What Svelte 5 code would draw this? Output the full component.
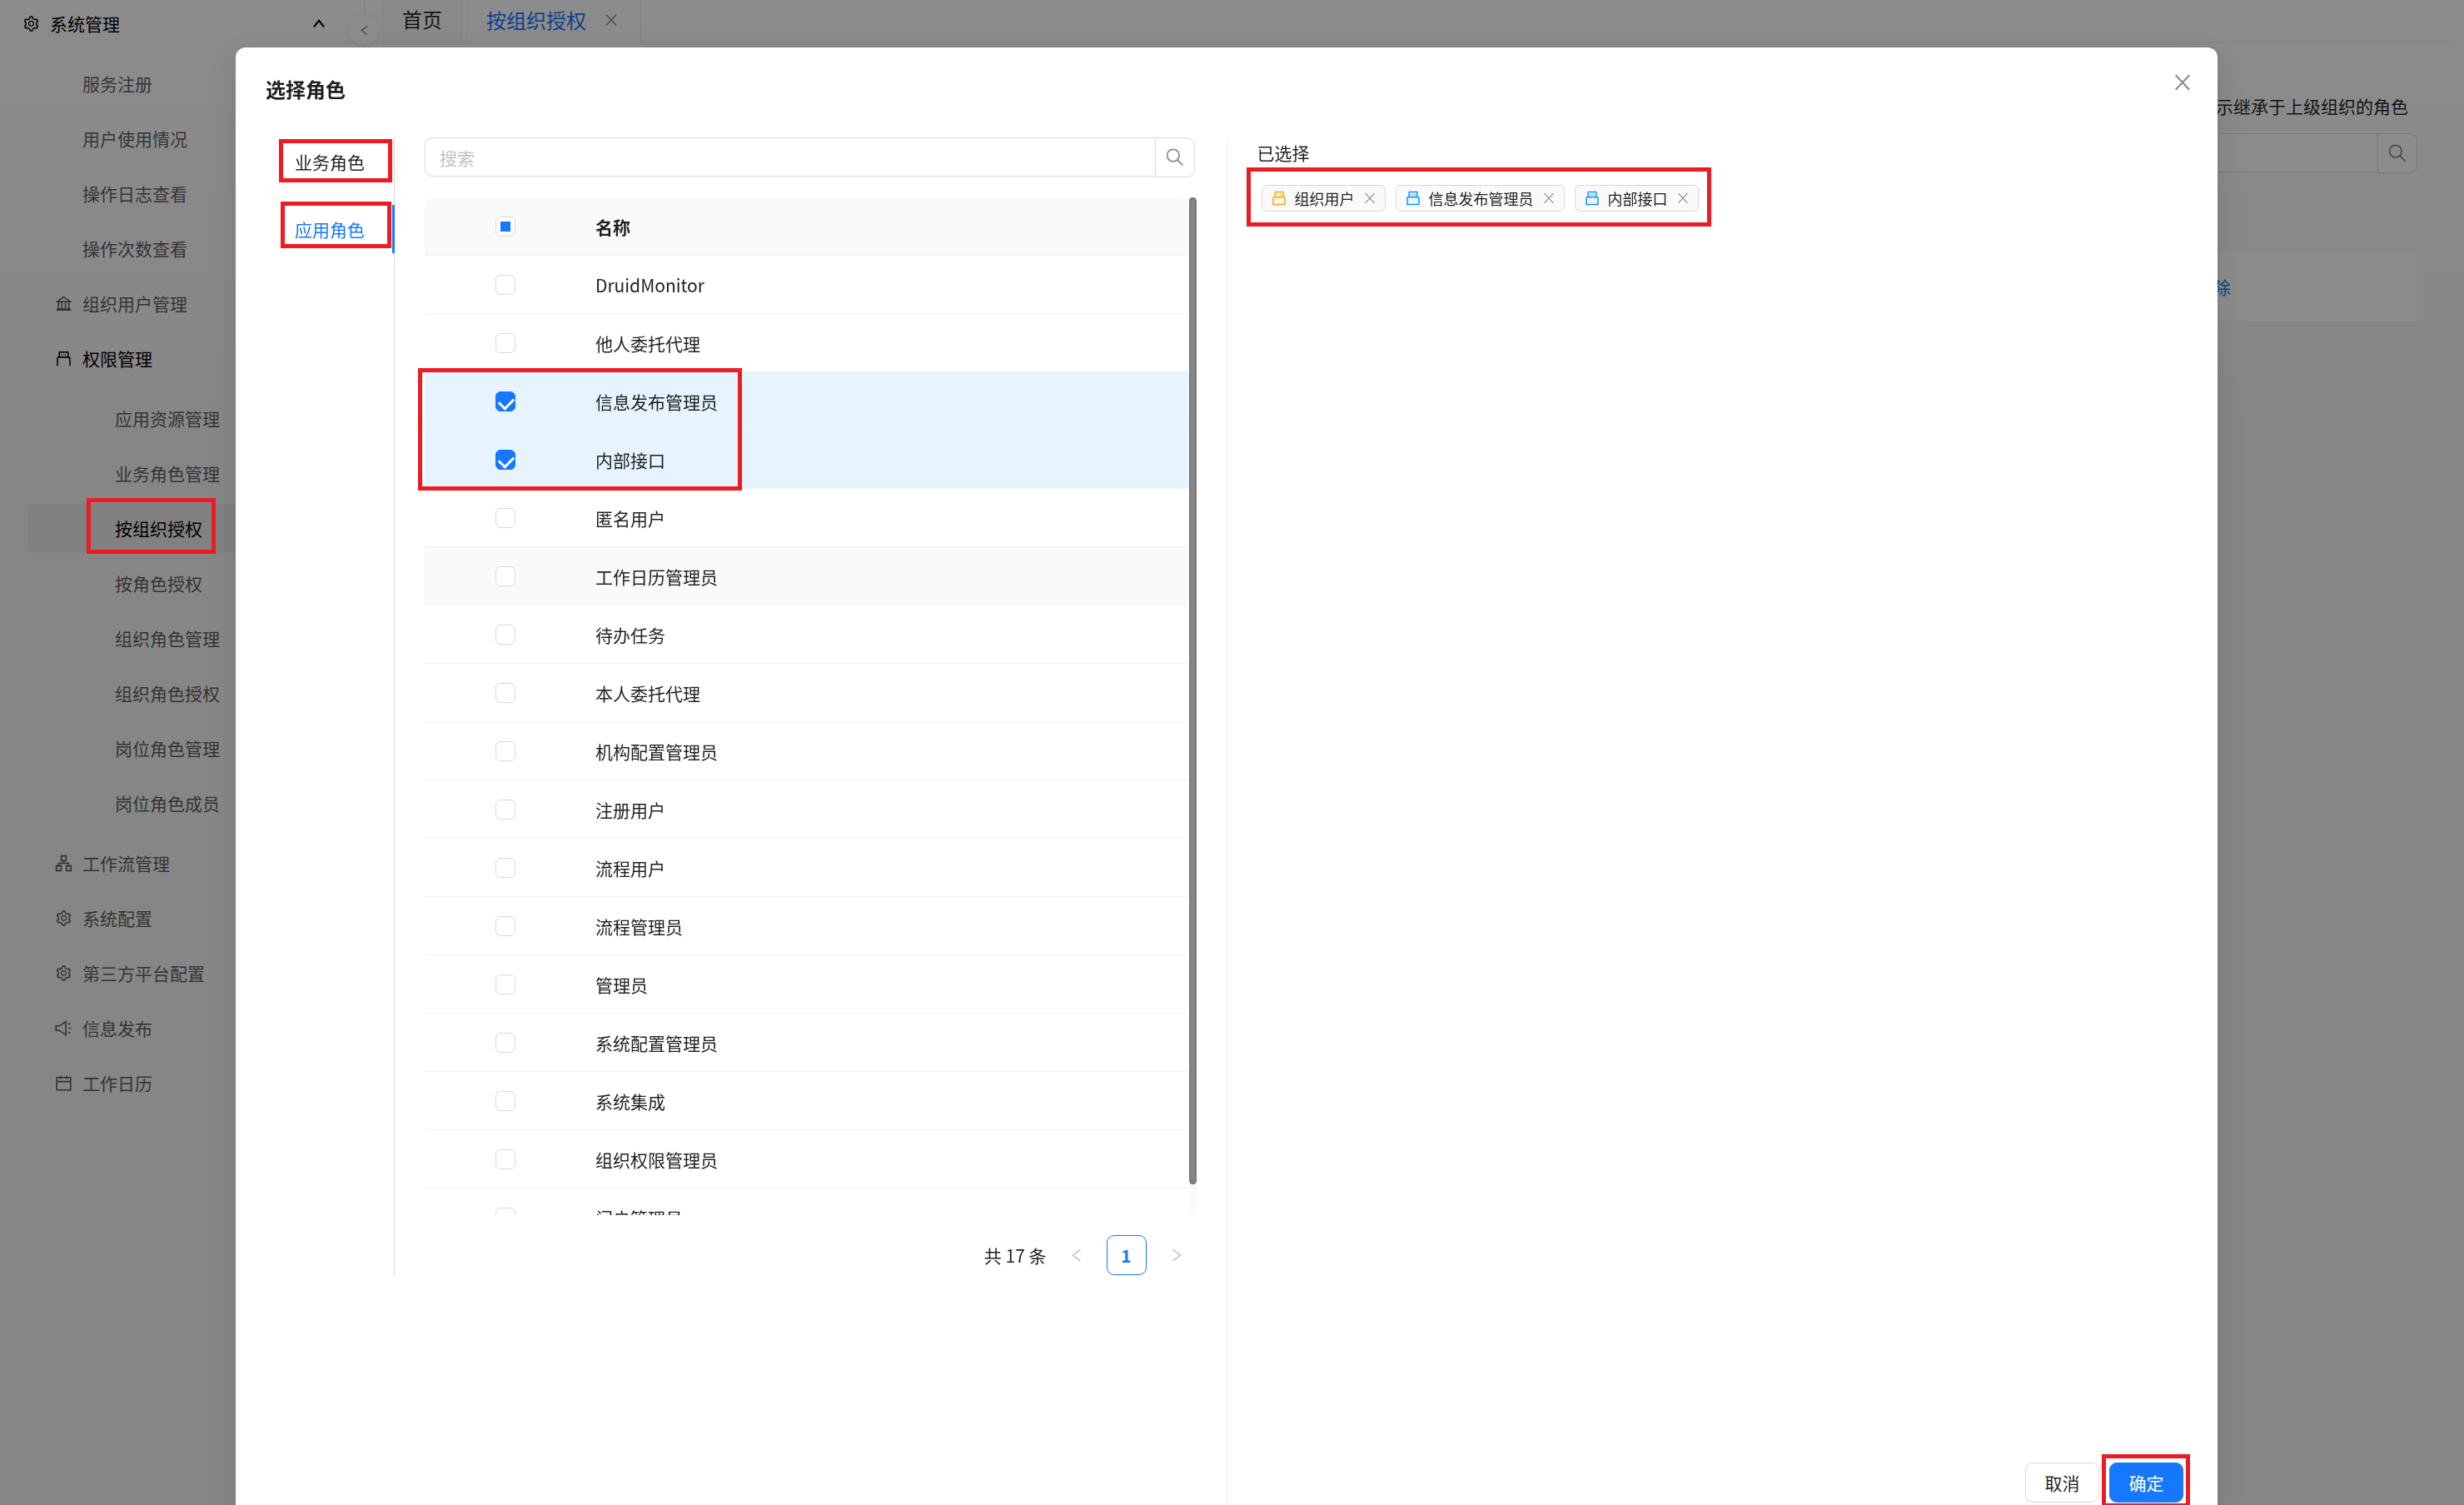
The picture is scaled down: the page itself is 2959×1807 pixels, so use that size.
<script>
  const roles = [
    'DruidMonitor', '他人委托代理', '信息发布管理员', '内部接口', '匿名用户', '工作日历管理员',
    '待办任务', '本人委托代理', '机构配置管理员', '注册用户', '流程用户', '流程管理员',
    '管理员', '系统配置管理员', '系统集成', '组织权限管理员', '门户管理员'
  ];
  let checked = $state({ 信息发布管理员: true, 内部接口: true });
  const hovered = '工作日历管理员';

  const topItems = ['服务注册', '用户使用情况', '操作日志查看', '操作次数查看'];
  const subItems = ['应用资源管理', '业务角色管理', '按组织授权', '按角色授权', '组织角色管理', '组织角色授权', '岗位角色管理', '岗位角色成员'];
  const lastItems = [
    { icon: 'flow', label: '工作流管理' },
    { icon: 'gear', label: '系统配置' },
    { icon: 'gear', label: '第三方平台配置' },
    { icon: 'horn', label: '信息发布' },
    { icon: 'calendar', label: '工作日历' }
  ];
  const tags = [
    { label: '组织用户', tone: 'orange' },
    { label: '信息发布管理员', tone: 'blue' },
    { label: '内部接口', tone: 'blue' }
  ];
</script>

{#snippet icon(name)}
  <svg class="icon {name}" viewBox="0 0 1024 1024" aria-hidden="true">
    {#if name === 'gear'}
      <path fill="currentColor" d="M924.8 625.7l-65.5-56c3.1-19 4.7-38.4 4.7-57.8s-1.6-38.8-4.7-57.8l65.5-56a32.03 32.03 0 009.3-35.2l-.9-2.6a443.74 443.74 0 00-79.7-137.9l-1.8-2.1a32.12 32.12 0 00-35.1-9.5l-81.3 28.9c-30-24.6-63.5-44-99.7-57.6l-15.7-85a32.05 32.05 0 00-25.8-25.7l-2.7-.5c-52.1-9.4-106.9-9.4-159 0l-2.7.5a32.05 32.05 0 00-25.8 25.7l-15.8 85.4a351.86 351.86 0 00-99 57.4l-81.9-29.1a32 32 0 00-35.1 9.5l-1.8 2.1a446.02 446.02 0 00-79.7 137.9l-.9 2.6c-4.5 12.5-.8 26.5 9.3 35.2l66.3 56.6c-3.1 18.8-4.6 38-4.6 57.1 0 19.2 1.5 38.4 4.6 57.1L99 625.5a32.03 32.03 0 00-9.3 35.2l.9 2.6c18.1 50.4 44.9 96.9 79.7 137.9l1.8 2.1a32.12 32.12 0 0035.1 9.5l81.9-29.1c29.8 24.5 63.1 43.9 99 57.4l15.8 85.4a32.05 32.05 0 0025.8 25.7l2.7.5a449.4 449.4 0 00159 0l2.7-.5a32.05 32.05 0 0025.8-25.7l15.7-85a350 350 0 0099.7-57.6l81.3 28.9a32 32 0 0035.1-9.5l1.8-2.1c34.8-41.1 61.6-87.5 79.7-137.9l.9-2.6c4.5-12.3.8-26.3-9.3-35zM788.3 465.9c2.5 15.1 3.8 30.6 3.8 46.1s-1.3 31-3.8 46.1l-6.6 40.1 74.7 63.9a370.03 370.03 0 01-42.6 73.6L721 702.8l-31.4 25.8c-23.9 19.6-50.5 35-79.3 45.8l-38.1 14.3-17.9 97a377.5 377.5 0 01-85 0l-17.9-97.2-37.8-14.5c-28.5-10.8-55-26.2-78.7-45.7l-31.4-25.9-93.4 33.2c-17-22.9-31.2-47.6-42.6-73.6l75.5-64.5-6.5-40c-2.4-14.9-3.7-30.3-3.7-45.5 0-15.3 1.2-30.6 3.7-45.5l6.5-40-75.5-64.5c11.3-26.1 25.6-50.7 42.6-73.6l93.4 33.2 31.4-25.9c23.7-19.5 50.2-34.9 78.7-45.7l37.9-14.3 17.9-97.2c28.1-3.2 56.8-3.2 85 0l17.9 97 38.1 14.3c28.7 10.8 55.4 26.2 79.3 45.8l31.4 25.8 92.8-32.9c17 22.9 31.2 47.6 42.6 73.6L781.8 426l6.5 39.9zM512 326c-97.2 0-176 78.8-176 176s78.8 176 176 176 176-78.8 176-176-78.8-176-176-176zm79.2 255.2A111.6 111.6 0 01512 614c-29.9 0-58-11.7-79.2-32.8A111.6 111.6 0 01400 502c0-29.9 11.7-58 32.8-79.2C454 401.6 482.1 390 512 390c29.9 0 58 11.6 79.2 32.8A111.6 111.6 0 01624 502c0 29.9-11.7 58-32.8 79.2z" />
    {:else if name === 'bank'}
      <path class="line" d="M80 892h864M512 120L140 400h744L512 120zM210 400v450M410 400v450M614 400v450M814 400v450M110 830h804" />
    {:else if name === 'usb'}
      <path class="line" d="M256 432V132h512v300M148 940V500q0-68 68-68h592q68 0 68 68v440" />
      <path fill="currentColor" d="M390 252h64v72h-64zM570 252h64v72h-64z" />
    {:else if name === 'stick'}
      <path class="line tint" d="M152 892V500q0-68 68-68h584q68 0 68 68v392z" />
      <path class="line tint" d="M264 432V132h496v300z" />
      <path fill="currentColor" d="M390 252h72v72h-72zM562 252h72v72h-72z" />
    {:else if name === 'flow'}
      <path class="line" d="M372 80h280v280H372zM80 664h280v280H80zM664 664h280v280H664zM512 360v152M220 664V512h584v152" />
    {:else if name === 'horn'}
      <path class="line" d="M60 380h190L640 120v784L250 644H60zM784 290l110-64M800 512h150M784 734l110 64" />
    {:else if name === 'calendar'}
      <path class="line" d="M108 184h808v732H108zM108 420h808M340 80v190M684 80v190" />
    {:else if name === 'finder'}
      <circle class="line" cx="420" cy="410" r="310" />
      <path class="line" d="M640 640l270 270" />
    {:else if name === 'close'}
      <path class="line" d="M160 140l704 744M864 140L160 884" />
    {:else if name === 'left'}
      <path class="line" d="M740 160L280 512l460 352" />
    {:else if name === 'right'}
      <path class="line" d="M284 160l460 352-460 352" />
    {:else if name === 'up'}
      <path class="line" d="M200 740l312-400 312 400" />
    {/if}
  </svg>
{/snippet}

<div class="app">
  <aside>
    <button class="group">
      {@render icon('gear')}
      <span>系统管理</span>
      {@render icon('up')}
    </button>
    <button class="collapse" aria-label="收起">{@render icon('left')}</button>
    <nav>
      {#each topItems as label}
        <a class="item" href="#top"><i class="slot"></i>{label}</a>
      {/each}
      <a class="item" href="#org">{@render icon('bank')}组织用户管理</a>
      <a class="item strong" href="#auth">{@render icon('usb')}权限管理</a>
      <div class="sub">
        {#each subItems as label}
          <a class="item" class:active={label === '按组织授权'} href="#sub">
            {label}
            {#if label === '按组织授权'}<span class="mark side-mark"></span>{/if}
          </a>
        {/each}
      </div>
      {#each lastItems as it}
        <a class="item" href="#more">{@render icon(it.icon)}{it.label}</a>
      {/each}
    </nav>
  </aside>

  <main>
    <div class="page-tabs">
      <button class="ptab">首页</button>
      <span class="sliver"></span>
      <button class="ptab current">按组织授权 {@render icon('close')}</button>
      <span class="rest"></span>
    </div>
    <div class="content">
      <p>表示继承于上级组织的角色</p>
      <form class="search">
        <input type="text" aria-label="关键字" />
        <button type="button" aria-label="查询">{@render icon('finder')}</button>
      </form>
      <table class="back-table">
        <thead><tr><th></th><th></th></tr></thead>
        <tbody><tr><td></td><td><a href="#remove">删除</a></td></tr></tbody>
      </table>
    </div>
  </main>

  <div class="mask"></div>

  <div class="wrap">
    <div class="modal" role="dialog" aria-labelledby="dlg-title">
      <h2 id="dlg-title">选择角色</h2>
      <button class="close-btn" aria-label="关闭">{@render icon('close')}</button>
      <div class="body">
        <section class="left-pane">
          <div class="picker">
            <div class="vtabs" role="tablist">
              <button role="tab" aria-selected="false">业务角色<span class="mark tab-mark-a"></span></button>
              <button role="tab" aria-selected="true">应用角色<span class="mark tab-mark-b"></span></button>
            </div>
            <div class="list">
              <form class="search">
                <input type="text" placeholder="搜索" aria-label="搜索" />
                <button type="button" aria-label="搜索角色">{@render icon('finder')}</button>
              </form>
              <div class="scroller">
                <div class="clip">
                  <table class="roles">
                    <thead>
                      <tr>
                        <th class="pick"><input type="checkbox" indeterminate={true} aria-label="全选" /></th>
                        <th>名称</th>
                      </tr>
                    </thead>
                    <tbody>
                      {#each roles as role, i}
                        <tr class:selected={checked[role]} class:hover={role === hovered}>
                          <td class="pick"><input type="checkbox" id="role-{i}" bind:checked={checked[role]} /></td>
                          <td><label for="role-{i}">{role}</label></td>
                        </tr>
                      {/each}
                    </tbody>
                  </table>
                </div>
                <div class="track"><div class="thumb"></div></div>
                <span class="mark rows-mark"></span>
              </div>
              <div class="pager">
                <span>共 17 条</span>
                <button aria-label="上一页">{@render icon('left')}</button>
                <button class="on">1</button>
                <button aria-label="下一页">{@render icon('right')}</button>
              </div>
            </div>
          </div>
        </section>
        <section class="right-pane">
          <h3>已选择</h3>
          <div class="tags">
            {#each tags as tag}
              <span class="tag">
                <span class={tag.tone}>{@render icon('stick')}</span>
                {tag.label}
                <button aria-label="移除">{@render icon('close')}</button>
              </span>
            {/each}
            <span class="mark tags-mark"></span>
          </div>
          <footer>
            <button class="btn">取消</button>
            <button class="btn primary">确定<span class="mark ok-mark"></span></button>
          </footer>
        </section>
      </div>
    </div>
  </div>
</div>

<style>
  :global(body) {
    margin: 0;
    overflow: hidden;
  }
  .app {
    display: flex;
    min-height: 100vh;
    background: linear-gradient(#fff, #f5f5f5 28%);
    font-family: 'Noto Sans CJK SC', sans-serif;
    font-size: 21px;
    line-height: 32px;
    color: rgba(0, 0, 0, 0.88);
  }
  .app * {
    box-sizing: border-box;
  }
  button,
  input {
    margin: 0;
    padding: 0;
    border: 0;
    background: none;
    font: inherit;
    color: inherit;
  }
  a {
    color: inherit;
    text-decoration: none;
  }
  .icon {
    width: 20px;
    height: 20px;
    flex: none;
    display: block;
  }
  .line {
    fill: none;
    stroke: currentColor;
    stroke-width: 76;
  }
  .mark {
    position: absolute;
    border: 5px solid #ed1c24;
    pointer-events: none;
    z-index: 30;
  }

  /* sidebar */
  aside {
    position: relative;
    width: 438px;
    flex: none;
    border-right: 1px solid #ececec;
  }
  .group {
    display: flex;
    align-items: center;
    gap: 12px;
    width: 100%;
    height: 56px;
    padding: 0 44px 0 27px;
    color: #000;
  }
  .group span {
    flex: 1;
    text-align: left;
  }
  .group .gear {
    width: 21px;
    height: 21px;
  }
  .group .up .line {
    stroke-width: 110;
  }
  .collapse {
    position: absolute;
    top: 18px;
    right: -18px;
    width: 36px;
    height: 36px;
    display: grid;
    place-items: center;
    border-radius: 50%;
    background: #fff;
    box-shadow: 0 2px 8px rgba(0, 0, 0, 0.08);
    color: #999;
  }
  .collapse .icon {
    width: 15px;
    height: 15px;
  }
  .collapse .line {
    stroke-width: 110;
  }
  nav,
  .sub {
    display: flex;
    flex-direction: column;
    gap: 6px;
  }
  nav {
    padding: 14px 12px 0 33px;
  }
  .item {
    position: relative;
    display: flex;
    align-items: center;
    gap: 12px;
    height: 60px;
    padding-left: 33px;
    border-radius: 6px;
    color: rgba(0, 0, 0, 0.65);
  }
  .item.strong {
    color: #000;
  }
  .slot {
    width: 21px;
  }
  .item .icon {
    width: 21px;
    height: 21px;
  }
  .sub {
    padding: 6px 0;
  }
  .sub .item {
    padding-left: 105px;
  }
  .item.active {
    background: rgba(0, 0, 0, 0.04);
    color: #000;
  }
  .side-mark {
    left: 71px;
    top: -6px;
    width: 155px;
    height: 67px;
  }

  /* page behind the dialog */
  main {
    flex: 1;
    min-width: 0;
    padding-right: 13px;
  }
  .page-tabs {
    display: flex;
    height: 52px;
    padding-left: 21px;
    font-size: 24px;
  }
  .ptab {
    display: flex;
    align-items: center;
    gap: 21px;
    padding: 0 23px 5px 23px;
    border: 1px solid #efefef;
    border-top: 0;
    background: #fafafa;
  }
  .ptab.current {
    padding-right: 26px;
    background: none;
    border-bottom: 0;
    color: #1677ff;
  }
  .ptab .icon {
    width: 18px;
    height: 18px;
    color: #888;
  }
  .sliver {
    width: 5px;
    border-bottom: 1px solid #efefef;
  }
  .rest {
    flex: 1;
    border-bottom: 1px solid #efefef;
  }
  .content {
    padding: 59px 43px 0 21px;
  }
  .content p {
    margin: 0 11px 17px 0;
    text-align: right;
  }
  .search {
    display: flex;
    align-items: flex-start;
  }
  .search input {
    flex: 1;
    min-width: 0;
    height: 47px;
    padding: 0 17px;
    border: 1px solid #d9d9d9;
    border-right: 0;
    border-radius: 9px 0 0 9px;
    background: #fff;
  }
  .search input::placeholder {
    color: #bfbfbf;
  }
  .search button {
    display: grid;
    place-items: center;
    width: 48px;
    height: 48px;
    border: 1px solid #d9d9d9;
    border-radius: 0 9px 9px 0;
    background: #fff;
    color: #8c8c8c;
  }
  .search .icon {
    width: 24px;
    height: 24px;
  }
  .content .search {
    margin-bottom: 24px;
  }
  .list .search {
    margin-right: 2px;
  }
  table {
    width: 100%;
    border-collapse: separate;
    border-spacing: 0;
    table-layout: fixed;
  }
  th {
    height: 70px;
    padding: 0 12px;
    background: #fafafa;
    border-bottom: 1px solid #f0f0f0;
    text-align: left;
    font-weight: 700;
  }
  th:first-child {
    border-top-left-radius: 12px;
  }
  th:last-child {
    border-top-right-radius: 12px;
  }
  td {
    height: 70px;
    padding: 0 12px;
    border-bottom: 1px solid #f0f0f0;
    background: #fff;
  }
  .back-table td {
    height: 85px;
  }
  .back-table th:last-child {
    width: 278px;
  }
  .back-table a {
    color: #1677ff;
  }

  .mask {
    position: fixed;
    inset: 0;
    z-index: 10;
    background: rgba(0, 0, 0, 0.45);
  }

  /* dialog */
  .wrap {
    position: fixed;
    inset: 0;
    z-index: 20;
    padding: 57px 296px 0 283px;
  }
  .modal {
    position: relative;
    display: flex;
    flex-direction: column;
    height: 100%;
    padding: 32px 36px 0;
    border-radius: 12px 12px 0 0;
    background: #fff;
    box-shadow: 0 9px 24px rgba(0, 0, 0, 0.08), 0 4px 9px -6px rgba(0, 0, 0, 0.12), 0 14px 42px 12px rgba(0, 0, 0, 0.05);
  }
  h2 {
    margin: 0 0 40px;
    font-size: 24px;
    line-height: 36px;
    font-weight: 700;
  }
  .close-btn {
    position: absolute;
    top: 26px;
    right: 26px;
    width: 32px;
    height: 32px;
    display: grid;
    place-items: center;
    color: #8c8c8c;
  }
  .close-btn .icon {
    width: 24px;
    height: 24px;
  }
  .close-btn .line {
    stroke-width: 90;
  }
  .body {
    flex: 1;
    display: flex;
    min-height: 0;
  }
  .left-pane,
  .right-pane {
    flex: 1;
    min-width: 0;
  }
  .left-pane {
    padding-right: 36px;
    border-right: 1px solid #efefef;
  }
  .picker {
    display: flex;
    gap: 36px;
  }
  .vtabs {
    display: flex;
    flex-direction: column;
    gap: 23px;
    border-right: 1px solid #d9d9d9;
  }
  .vtabs button {
    position: relative;
    height: 58px;
    padding: 0 33px 0 35px;
    margin-right: -1px;
    border-right: 3px solid transparent;
  }
  .vtabs button[aria-selected='true'] {
    border-right-color: #1677ff;
    color: #1677ff;
  }
  .tab-mark-a {
    left: 16px;
    top: 2px;
    width: 136px;
    height: 52px;
  }
  .tab-mark-b {
    left: 18px;
    top: -4px;
    width: 133px;
    height: 56px;
  }
  .list {
    flex: 1;
    min-width: 0;
    display: flex;
    flex-direction: column;
    gap: 24px;
  }
  .scroller {
    position: relative;
    display: flex;
    height: 1222px;
  }
  .clip {
    flex: 1;
    overflow: hidden;
  }
  .pick {
    width: 193px;
  }
  .pick input {
    appearance: none;
    display: block;
    position: relative;
    width: 24px;
    height: 24px;
    margin: 0 auto;
    border: 1px solid #d9d9d9;
    border-radius: 6px;
    background: #fff;
  }
  .pick input:indeterminate::after {
    content: '';
    position: absolute;
    inset: 5px;
    background: #1677ff;
  }
  .pick input:checked {
    border-color: #1677ff;
    background: #1677ff;
  }
  .pick input:checked::after {
    content: '';
    position: absolute;
    left: 6px;
    top: 3px;
    width: 9px;
    height: 14px;
    border: solid #fff;
    border-width: 0 3px 3px 0;
    transform: rotate(45deg);
  }
  .selected td {
    background: #e6f4ff;
  }
  .hover td {
    background: #fafafa;
  }
  .track {
    width: 9px;
    border-radius: 5px;
    background: #fafafa;
  }
  .thumb {
    height: 97%;
    border-radius: 5px;
    background: #8b8b8b;
    box-shadow: inset 0 0 5px rgba(0, 0, 0, 0.3);
  }
  .rows-mark {
    left: -8px;
    top: 205px;
    width: 389px;
    height: 147px;
  }
  .pager {
    display: flex;
    align-items: center;
    justify-content: flex-end;
    gap: 12px;
  }
  .pager button {
    display: grid;
    place-items: center;
    width: 48px;
    height: 48px;
    border-radius: 9px;
    color: #bfbfbf;
  }
  .pager button.on {
    border: 1px solid #1677ff;
    color: #1677ff;
    font-weight: 600;
  }
  .right-pane {
    display: flex;
    flex-direction: column;
    padding-left: 36px;
  }
  h3 {
    margin: 0 0 21px;
    font-size: 21px;
    line-height: 36px;
    font-weight: 400;
  }
  .tags {
    position: relative;
    align-self: flex-start;
    display: flex;
    gap: 12px;
    margin-left: 5px;
  }
  .tag {
    display: flex;
    align-items: center;
    gap: 11px;
    height: 32px;
    padding: 0 11px 0 12px;
    border: 1px solid #d9d9d9;
    border-radius: 6px;
    background: #fafafa;
    font-size: 18px;
  }
  .tag .icon {
    width: 16px;
    height: 16px;
  }
  .tag .stick {
    width: 20px;
    height: 20px;
    margin: 0 -2px;
  }
  .tag button {
    color: #8c8c8c;
  }
  .tag button .icon {
    margin: 0 -1px;
  }
  .orange {
    color: #faa51a;
  }
  .orange .tint {
    fill: #fff7e6;
  }
  .blue {
    color: #1890ff;
  }
  .blue .tint {
    fill: #e6f7ff;
  }
  .tags-mark {
    left: -18px;
    right: -15px;
    top: -21px;
    bottom: -18px;
  }
  footer {
    display: flex;
    justify-content: flex-end;
    gap: 12px;
    margin-top: auto;
    padding: 0 5px 3px 0;
  }
  .btn {
    position: relative;
    width: 89px;
    height: 48px;
    border: 1px solid #d9d9d9;
    border-radius: 9px;
    background: #fff;
  }
  .btn.primary {
    border-color: #1677ff;
    background: #1677ff;
    color: #fff;
  }
  .ok-mark {
    left: -10px;
    right: -9px;
    top: -11px;
    bottom: -7px;
  }
</style>
